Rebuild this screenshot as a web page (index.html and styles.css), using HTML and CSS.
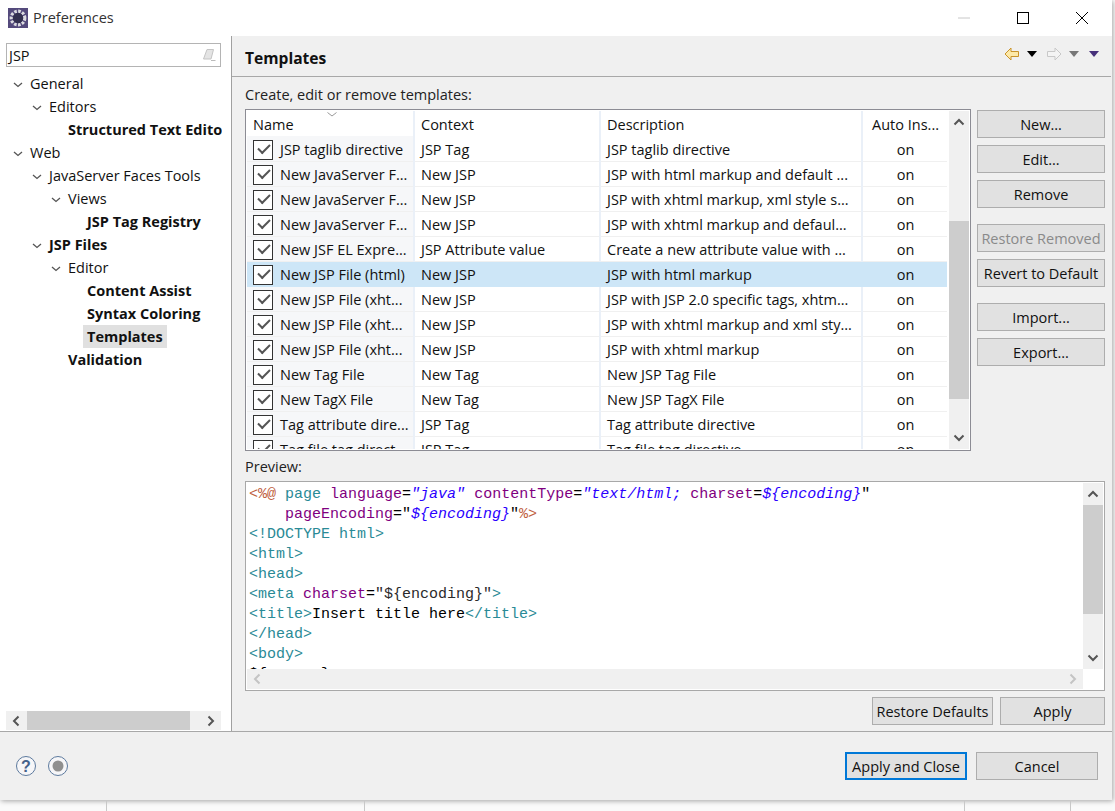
FILE: index.html
```html
<!DOCTYPE html>
<html lang="en">
<head>
<meta charset="utf-8">
<title>Preferences</title>
<link rel="stylesheet" href="styles.css">
</head>
<body>
<div class="dialog">
  <header class="titlebar">
    <svg class="app-icon" width="20" height="20" viewBox="0 0 20 20"><rect width="20" height="20" fill="#544a7c"/><circle cx="10" cy="10" r="6.8" fill="none" stroke="#dcdce0" stroke-width="3.2" stroke-dasharray="2.6 1.4"/><circle cx="10" cy="10" r="5.2" fill="#33304f"/></svg>
    <span class="title">Preferences</span>
    <div class="win-controls">
      <svg width="14" height="14" viewBox="0 0 14 14"><path d="M1 7h12" stroke="#c8c8c8"/></svg>
      <svg width="14" height="14" viewBox="0 0 14 14"><rect x="1.5" y="1.5" width="11" height="11" fill="none" stroke="#000"/></svg>
      <svg width="14" height="14" viewBox="0 0 14 14"><path d="M1 1l12 12M13 1L1 13" stroke="#000" fill="none"/></svg>
    </div>
  </header>
  <div class="main">
    <aside class="sidebar">
      <div class="search"><span>JSP</span>
        <svg width="14" height="14" viewBox="0 0 14 14"><path d="M5 1.5h6.5L9 11H1.5z" fill="#e4e4e4" stroke="#c4c4c4"/><path d="M9 12.5h4.5" stroke="#bbb"/></svg>
      </div>
      <ul class="tree">
        <li class="l0"><svg class="chev" width="10" height="6" viewBox="0 0 10 6"><path d="M1 1l4 3.5L9 1" fill="none" stroke="#555" stroke-width="1.3"/></svg>General</li>
        <li class="l1"><svg class="chev" width="10" height="6" viewBox="0 0 10 6"><path d="M1 1l4 3.5L9 1" fill="none" stroke="#555" stroke-width="1.3"/></svg>Editors</li>
        <li class="l2 leaf bold">Structured Text Editor</li>
        <li class="l0"><svg class="chev" width="10" height="6" viewBox="0 0 10 6"><path d="M1 1l4 3.5L9 1" fill="none" stroke="#555" stroke-width="1.3"/></svg>Web</li>
        <li class="l1"><svg class="chev" width="10" height="6" viewBox="0 0 10 6"><path d="M1 1l4 3.5L9 1" fill="none" stroke="#555" stroke-width="1.3"/></svg>JavaServer Faces Tools</li>
        <li class="l2"><svg class="chev" width="10" height="6" viewBox="0 0 10 6"><path d="M1 1l4 3.5L9 1" fill="none" stroke="#555" stroke-width="1.3"/></svg>Views</li>
        <li class="l3 leaf bold">JSP Tag Registry</li>
        <li class="l1 bold"><svg class="chev" width="10" height="6" viewBox="0 0 10 6"><path d="M1 1l4 3.5L9 1" fill="none" stroke="#555" stroke-width="1.3"/></svg>JSP Files</li>
        <li class="l2"><svg class="chev" width="10" height="6" viewBox="0 0 10 6"><path d="M1 1l4 3.5L9 1" fill="none" stroke="#555" stroke-width="1.3"/></svg>Editor</li>
        <li class="l3 leaf bold">Content Assist</li>
        <li class="l3 leaf bold">Syntax Coloring</li>
        <li class="l3 leaf bold"><span class="current">Templates</span></li>
        <li class="l2 leaf bold">Validation</li>
      </ul>
      <div class="hscroll side-hscroll">
        <svg width="10" height="12" viewBox="0 0 10 12"><path d="M7.5 1.5L3 6l4.5 4.5" fill="none" stroke="#555" stroke-width="2"/></svg>
        <div class="hthumb"></div>
        <svg width="10" height="12" viewBox="0 0 10 12"><path d="M2.5 1.5L7 6l-4.5 4.5" fill="none" stroke="#555" stroke-width="2"/></svg>
      </div>
    </aside>
    <section class="content">
      <div class="page-head">
        <h1>Templates</h1>
        <div class="nav">
          <svg width="16" height="14" viewBox="0 0 16 14"><path d="M7 1L1 7l6 6V9.5h7.5v-5H7z" fill="#fde9a8" stroke="#c9932a"/></svg>
          <svg class="tri" width="10" height="6" viewBox="0 0 10 6"><path d="M0 0h10L5 6z" fill="#000"/></svg>
          <svg width="16" height="14" viewBox="0 0 16 14"><path d="M9 1l6 6-6 6V9.5H1.5v-5H9z" fill="#f4f4f4" stroke="#c8c8c8"/></svg>
          <svg class="tri" width="10" height="6" viewBox="0 0 10 6"><path d="M0 0h10L5 6z" fill="#777"/></svg>
          <svg class="tri" width="10" height="6" viewBox="0 0 10 6"><path d="M0 0h10L5 6z" fill="#46307a"/></svg>
        </div>
      </div>
      <div class="body">
        <p class="label">Create, edit or remove templates:</p>
        <div class="tpl-row">
          <div class="tpl-table">
            <div class="table-clip">
              <svg class="sort" width="10" height="5" viewBox="0 0 10 5"><path d="M0.5 0.5L5 4l4.5-3.5" fill="none" stroke="#999"/></svg>
              <table>
                <colgroup><col class="c1"><col class="c2"><col class="c3"><col class="c4"></colgroup>
                <thead><tr><th>Name</th><th>Context</th><th>Description</th><th>Auto Ins...</th></tr></thead>
                <tbody>
                  <tr class="first"><td class="name"><i class="cb"></i>JSP taglib directive</td><td>JSP Tag</td><td>JSP taglib directive</td><td class="on">on</td></tr>
                  <tr><td class="name"><i class="cb"></i>New JavaServer F...</td><td>New JSP</td><td>JSP with html markup and default ...</td><td class="on">on</td></tr>
                  <tr><td class="name"><i class="cb"></i>New JavaServer F...</td><td>New JSP</td><td>JSP with xhtml markup, xml style s...</td><td class="on">on</td></tr>
                  <tr><td class="name"><i class="cb"></i>New JavaServer F...</td><td>New JSP</td><td>JSP with xhtml markup and defaul...</td><td class="on">on</td></tr>
                  <tr><td class="name"><i class="cb"></i>New JSF EL Expre...</td><td>JSP Attribute value</td><td>Create a new attribute value with ...</td><td class="on">on</td></tr>
                  <tr class="sel"><td class="name"><i class="cb"></i>New JSP File (html)</td><td>New JSP</td><td>JSP with html markup</td><td class="on">on</td></tr>
                  <tr><td class="name"><i class="cb"></i>New JSP File (xht...</td><td>New JSP</td><td>JSP with JSP 2.0 specific tags, xhtm...</td><td class="on">on</td></tr>
                  <tr><td class="name"><i class="cb"></i>New JSP File (xht...</td><td>New JSP</td><td>JSP with xhtml markup and xml sty...</td><td class="on">on</td></tr>
                  <tr><td class="name"><i class="cb"></i>New JSP File (xht...</td><td>New JSP</td><td>JSP with xhtml markup</td><td class="on">on</td></tr>
                  <tr><td class="name"><i class="cb"></i>New Tag File</td><td>New Tag</td><td>New JSP Tag File</td><td class="on">on</td></tr>
                  <tr><td class="name"><i class="cb"></i>New TagX File</td><td>New Tag</td><td>New JSP TagX File</td><td class="on">on</td></tr>
                  <tr><td class="name"><i class="cb"></i>Tag attribute dire...</td><td>JSP Tag</td><td>Tag attribute directive</td><td class="on">on</td></tr>
                  <tr><td class="name"><i class="cb"></i>Tag file tag direct...</td><td>JSP Tag</td><td>Tag file tag directive</td><td class="on">on</td></tr>
                </tbody>
              </table>
            </div>
            <div class="vscroll tpl-vscroll">
              <svg class="arrow" width="12" height="8" viewBox="0 0 12 8"><path d="M1.5 6.5L6 2l4.5 4.5" fill="none" stroke="#555" stroke-width="2"/></svg>
              <div class="vtrack"><div class="vthumb"></div></div>
              <svg class="arrow" width="12" height="8" viewBox="0 0 12 8"><path d="M1.5 1.5L6 6l4.5-4.5" fill="none" stroke="#555" stroke-width="2"/></svg>
            </div>
          </div>
          <div class="side-buttons">
            <button>New...</button>
            <button>Edit...</button>
            <button class="gap-s">Remove</button>
            <button disabled>Restore Removed</button>
            <button class="gap-s">Revert to Default</button>
            <button>Import...</button>
            <button>Export...</button>
          </div>
        </div>
        <p class="label preview-label">Preview:</p>
        <div class="preview">
          <div class="preview-top">
            <pre class="code"><span class="d">&lt;%@</span> <span class="t">page</span> <span class="a">language</span>=<span class="v">"java"</span> <span class="a">contentType</span>=<span class="v">"text/html; </span><span class="a">charset</span>=<span class="v">${encoding}</span>"
    <span class="a">pageEncoding</span>="<span class="v">${encoding}</span>"<span class="d">%&gt;</span>
<span class="t">&lt;!DOCTYPE html&gt;</span>
<span class="t">&lt;html&gt;</span>
<span class="t">&lt;head&gt;</span>
<span class="t">&lt;meta</span> <span class="a">charset</span>=<span class="k">"${encoding}"</span><span class="t">&gt;</span>
<span class="t">&lt;title&gt;</span>Insert title here<span class="t">&lt;/title&gt;</span>
<span class="t">&lt;/head&gt;</span>
<span class="t">&lt;body&gt;</span>
${cursor}</pre>
            <div class="vscroll pre-vscroll">
              <svg class="arrow" width="12" height="8" viewBox="0 0 12 8"><path d="M1.5 6.5L6 2l4.5 4.5" fill="none" stroke="#555" stroke-width="2"/></svg>
              <div class="vtrack"><div class="vthumb"></div></div>
              <svg class="arrow" width="12" height="8" viewBox="0 0 12 8"><path d="M1.5 1.5L6 6l4.5-4.5" fill="none" stroke="#555" stroke-width="2"/></svg>
            </div>
          </div>
          <div class="hscroll pre-hscroll">
            <svg width="10" height="12" viewBox="0 0 10 12"><path d="M7.5 1.5L3 6l4.5 4.5" fill="none" stroke="#c4c4c4" stroke-width="2"/></svg>
            <svg width="10" height="12" viewBox="0 0 10 12"><path d="M2.5 1.5L7 6l-4.5 4.5" fill="none" stroke="#c4c4c4" stroke-width="2"/></svg>
          </div>
        </div>
        <div class="page-actions">
          <button class="restore">Restore Defaults</button>
          <button class="apply">Apply</button>
        </div>
      </div>
    </section>
  </div>
  <footer class="footer">
    <svg width="22" height="22" viewBox="0 0 22 22"><circle cx="11" cy="11" r="9.5" fill="#f6f6f8" stroke="#5d7a9e"/><text x="11" y="16.5" text-anchor="middle" class="help">?</text></svg>
    <svg width="22" height="22" viewBox="0 0 22 22"><circle cx="11" cy="11" r="9.5" fill="#f6f6f8" stroke="#5d7a9e"/><circle cx="11" cy="11" r="5.5" fill="#8f8f8f"/></svg>
    <div class="footer-actions">
      <button class="default">Apply and Close</button>
      <button>Cancel</button>
    </div>
  </footer>
</div>
<div class="behind">
  <span class="b1"></span><span class="b2"></span><span class="b3"></span><span class="b4"></span>
</div>
</body>
</html>
```

FILE: styles.css
```css
* { box-sizing: border-box; }
html, body { margin: 0; padding: 0; height: 100%; overflow: hidden; }
body {
  background: #fafafa;
  font-family: "Open Sans", "Noto Sans", sans-serif;
  font-size: 14.5px;
  color: #111;
}
.dialog {
  width: 1112px;
  height: 800px;
  background: #f0f0f0;
  display: flex;
  flex-direction: column;
  box-shadow: 1px 1px 5px rgba(0,0,0,.35);
}
.titlebar {
  height: 36px;
  background: #fff;
  display: flex;
  align-items: center;
  padding-left: 8px;
  flex: none;
}
.app-icon { margin-right: 5px; margin-top: -1px; }
.title { color: #333; margin-top: -1px; }
.win-controls {
  margin-left: auto;
  display: flex;
  gap: 45px;
  padding-right: 23px;
  align-items: center;
}
.main { flex: 1; display: flex; min-height: 0; }
.sidebar {
  width: 232px;
  background: #fff;
  border-right: 1px solid #a0a0a0;
  padding: 7px 10px 0 6px;
  display: flex;
  flex-direction: column;
  flex: none;
}
.search {
  height: 24px;
  width: 215px;
  border: 1px solid #b4b4b4;
  display: flex;
  align-items: center;
  justify-content: space-between;
  padding: 0 4px 0 2px;
  flex: none;
}
.tree { list-style: none; margin: 5px 0 0; padding: 0; flex: 1; overflow: hidden; width: 216px; }
.tree li { height: 23px; line-height: 23px; white-space: nowrap; display: flex; align-items: center; overflow: hidden; }
.chev { margin-right: 7px; flex: none; margin-top: 2px; }
.l0 { padding-left: 7px; }
.l1 { padding-left: 26px; }
.l2 { padding-left: 45px; }
.l3 { padding-left: 64px; }
.leaf.l2 { padding-left: 62px; }
.leaf.l3 { padding-left: 81px; }
.bold { font-weight: 700; }
.current { background: #e0e0e0; padding: 0 4px; margin-left: -4px; display: block; }
.hscroll { display: flex; align-items: center; justify-content: space-between; background: #f0f0f0; }
.side-hscroll { height: 19px; width: 215px; margin-bottom: 1px; padding: 0 5px; justify-content: flex-start; flex: none; }
.hthumb { width: 163px; height: 19px; background: #cdcdcd; margin-left: 6px; margin-right: auto; }
.content { flex: 1; min-width: 0; display: flex; flex-direction: column; }
.page-head {
  height: 41px;
  border-bottom: 1px solid #a8a8a8;
  display: flex;
  align-items: center;
  margin-right: 1px;
  padding: 4px 12px 0 13px;
  flex: none;
}
.page-head h1 { font-size: 15.6px; font-weight: 700; margin: 0; color: #111; }
.nav { margin-left: auto; display: flex; align-items: center; margin-top: -8px; }
.nav .tri { margin: 0 9px 0 7px; }
.nav .tri:last-child { margin: 0 0 0 1px; }
.body { padding: 0 7px 0 13px; flex: 1; display: flex; flex-direction: column; }
.label { margin: 0; height: 21px; line-height: 20px; padding-top: 8px; box-sizing: content-box; color: #222; }
.tpl-row { display: flex; gap: 6px; margin-top: 3px; }
.tpl-table {
  width: 726px;
  height: 342px;
  border: 1px solid #8c8c94;
  background: #fff;
  display: flex;
  padding: 1px;
  flex: none;
}
.table-clip { width: 701px; overflow: hidden; position: relative; }
.sort { position: absolute; left: 80px; top: 1px; }
table { border-collapse: collapse; table-layout: fixed; width: 701px; }
.c1 { width: 167px; } .c2 { width: 186px; } .c3 { width: 262px; } .c4 { width: 86px; }
th { height: 25px; font-weight: 400; text-align: left; padding: 2px 6px 0; border-right: 2px solid #eaf0f8; }
th:last-child { border-right: 0; text-align: center; padding: 2px 0 0; }
td { height: 25px; padding: 2px 6px 0; white-space: nowrap; overflow: hidden; border-bottom: 1px solid #f0f0f0; border-right: 2px solid #eaf0f8; }
td:last-child { border-right: 0; }
td.name { background: #f6f7f9; padding-left: 6px; }
td.on { text-align: center; }
tr.first td { padding-top: 3px; }
tr.sel td { background: #cde6f7; border-right-color: #cde6f7; border-bottom-color: #cde6f7; }
.cb {
  display: inline-block;
  width: 20px; height: 20px;
  border: 1px solid #333;
  background: #fff;
  margin-right: 7px;
  vertical-align: -5px;
  position: relative;
}
.cb::after {
  content: "";
  position: absolute;
  left: 4px; top: 3px;
  width: 10px; height: 5px;
  border-left: 2px solid #555;
  border-bottom: 2px solid #555;
  transform: rotate(-45deg);
}
.vscroll { display: flex; flex-direction: column; align-items: center; background: #f0f0f0; flex: none; }
.arrow { flex: none; margin: 7px 0; }
.tpl-vscroll { width: 20px; margin-left: 2px; height: 338px; }
.vtrack { flex: 1; width: 100%; position: relative; }
.tpl-vscroll .vthumb { position: absolute; top: 88px; left: 0; right: 0; height: 178px; background: #cdcdcd; }
.side-buttons { width: 128px; flex: none; display: flex; flex-direction: column; gap: 7px; padding-top: 1px; }
button {
  font: inherit;
  color: #111;
  height: 28px;
  background: #e1e1e1;
  border: 1px solid #adadad;
  padding: 0;
  white-space: nowrap;
  flex: none;
}
button:disabled { color: #8a8a8a; }
.side-buttons .gap-s { margin-bottom: 9px; }
.preview-label { margin-top: 0; height: 26px; padding-top: 6px; }
.preview {
  width: 860px;
  height: 210px;
  border: 1px solid #a8a8a8;
  background: #fff;
  margin-top: -2px;
  padding: 1px;
  display: flex;
  flex-direction: column;
}
.preview-top { flex: 1; display: flex; min-height: 0; }
.code {
  flex: 1;
  margin: 0;
  padding: 2px 0 0 2px;
  font-family: "Liberation Mono", "DejaVu Sans Mono", monospace;
  font-size: 15px;
  line-height: 20px;
  height: 186px;
  overflow: hidden;
  color: #000;
}
.d { color: #bf5f3f; }
.t { color: #2a8a96; }
.a { color: #7f007f; }
.v { color: #2a00ff; font-style: italic; }
.k { color: #2a2a2a; }
.pre-vscroll { width: 20px; height: 186px; }
.pre-vscroll .vthumb { position: absolute; top: 0; left: 0; right: 0; height: 109px; background: #cdcdcd; }
.pre-hscroll { height: 20px; width: 836px; padding: 0 5px 0 5px; flex: none; }
.page-actions { display: flex; gap: 7px; justify-content: flex-end; margin-top: 6px; width: 860px; }
.restore { width: 121px; }
.apply { width: 105px; }
.footer {
  height: 69px;
  border-top: 1px solid #a8a8a8;
  display: flex;
  align-items: center;
  gap: 10px;
  padding: 0 14px 0 15px;
  flex: none;
}
.help { font: 700 16px "Liberation Sans", sans-serif; fill: #44618a; }
.footer-actions { margin-left: auto; display: flex; gap: 9px; }
.footer-actions button { width: 122px; }
.footer-actions .default { border: 2px solid #0078d7; }
.behind { height: 11px; display: flex; }
.behind span { border-right: 1px solid #c8c8c8; height: 11px; display: block; }
.b1 { width: 107px; } .b2 { width: 258px; } .b3 { width: 600px; } .b4 { width: 106px; }
```
